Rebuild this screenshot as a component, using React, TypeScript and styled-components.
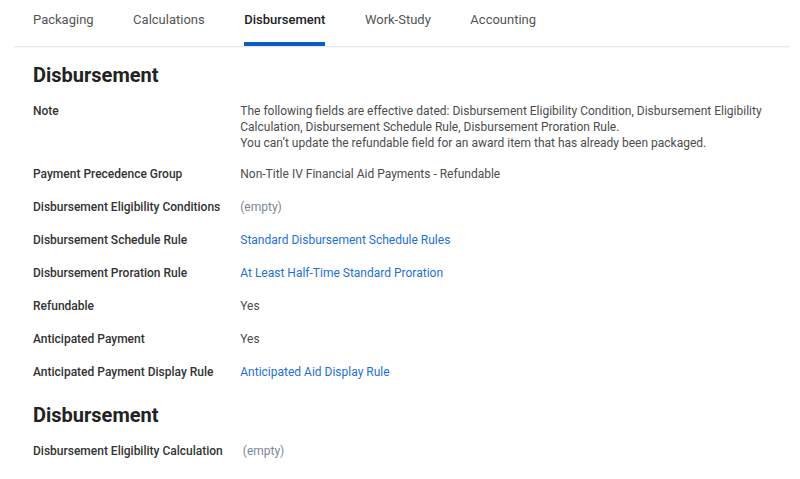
import React from "react";
import styled, { createGlobalStyle } from "styled-components";

const Global = createGlobalStyle`
  html, body { margin: 0; padding: 0; background: #ffffff; }
  body { font-family: Roboto, "Noto Sans", "Liberation Sans", sans-serif; -webkit-font-smoothing: antialiased; }
`;

const Page = styled.div`
  width: 800px;
  height: 479px;
  overflow: hidden;
  background: #fff;
`;

const TabBar = styled.nav`
  display: flex;
  gap: 39.5px;
  margin: 0 11px 0 14px;
  padding-left: 19px;
  border-bottom: 1px solid #e6e9ee;
  box-shadow: 0 1px 1px rgba(0, 0, 0, 0.03);
`;

const Tab = styled.div<{ $active?: boolean }>`
  padding: 12px 0 14px;
  font-size: 13px;
  line-height: 16px;
  color: ${(p) => (p.$active ? "#222" : "#555")};
  font-weight: ${(p) => (p.$active ? 500 : 400)};
  border-bottom: 4px solid ${(p) => (p.$active ? "#0a5bc4" : "transparent")};
`;

const Content = styled.main`
  display: flex;
  flex-direction: column;
  gap: 23px;
  padding: 16px 33px 0;
`;

const Section = styled.section`
  display: flex;
  flex-direction: column;
  gap: 16px;
`;

const Heading = styled.h2`
  margin: 0;
  font-size: 20px;
  line-height: 24px;
  font-weight: 700;
  color: #222;
`;

const Fields = styled.div`
  display: grid;
  grid-template-columns: max-content 1fr;
  column-gap: 20px;
  row-gap: 17px;
`;

const Label = styled.div<{ $tight?: boolean }>`
  font-size: 12px;
  line-height: 16px;
  font-weight: 500;
  color: #333;
  margin-bottom: ${(p) => (p.$tight ? "-2px" : "0")};
`;

const Value = styled.div<{ $kind?: "text" | "link" | "empty"; $tight?: boolean }>`
  font-size: 12px;
  line-height: 16px;
  color: ${(p) =>
    p.$kind === "link" ? "#1f6fd6" : p.$kind === "empty" ? "#7c8694" : "#4d4d4d"};
  margin-bottom: ${(p) => (p.$tight ? "-2px" : "0")};
  cursor: ${(p) => (p.$kind === "link" ? "pointer" : "default")};
`;

type Field = { label: string; value: React.ReactNode; kind?: "text" | "link" | "empty"; tight?: boolean };

const section1: Field[] = [
  {
    label: "Note",
    tight: true,
    value: (
      <>
        The following fields are effective dated: Disbursement Eligibility Condition, Disbursement Eligibility
        Calculation, Disbursement Schedule Rule, Disbursement Proration Rule.
        <br />
        You can’t update the refundable field for an award item that has already been packaged.
      </>
    ),
  },
  { label: "Payment Precedence Group", value: "Non-Title IV Financial Aid Payments - Refundable" },
  { label: "Disbursement Eligibility Conditions", value: "(empty)", kind: "empty" },
  { label: "Disbursement Schedule Rule", value: "Standard Disbursement Schedule Rules", kind: "link" },
  { label: "Disbursement Proration Rule", value: "At Least Half-Time Standard Proration", kind: "link" },
  { label: "Refundable", value: "Yes" },
  { label: "Anticipated Payment", value: "Yes" },
  { label: "Anticipated Payment Display Rule", value: "Anticipated Aid Display Rule", kind: "link" },
];

const section2: Field[] = [
  { label: "Disbursement Eligibility Calculation", value: "(empty)", kind: "empty" },
];

const tabs = ["Packaging", "Calculations", "Disbursement", "Work-Study", "Accounting"];

function FieldList({ fields }: { fields: Field[] }) {
  return (
    <Fields>
      {fields.map((f) => (
        <React.Fragment key={f.label}>
          <Label $tight={f.tight}>{f.label}</Label>
          <Value $kind={f.kind ?? "text"} $tight={f.tight}>
            {f.value}
          </Value>
        </React.Fragment>
      ))}
    </Fields>
  );
}

export default function App() {
  return (
    <Page>
      <Global />
      <TabBar>
        {tabs.map((t) => (
          <Tab key={t} $active={t === "Disbursement"}>
            {t}
          </Tab>
        ))}
      </TabBar>
      <Content>
        <Section>
          <Heading>Disbursement</Heading>
          <FieldList fields={section1} />
        </Section>
        <Section>
          <Heading>Disbursement</Heading>
          <FieldList fields={section2} />
        </Section>
      </Content>
    </Page>
  );
}
